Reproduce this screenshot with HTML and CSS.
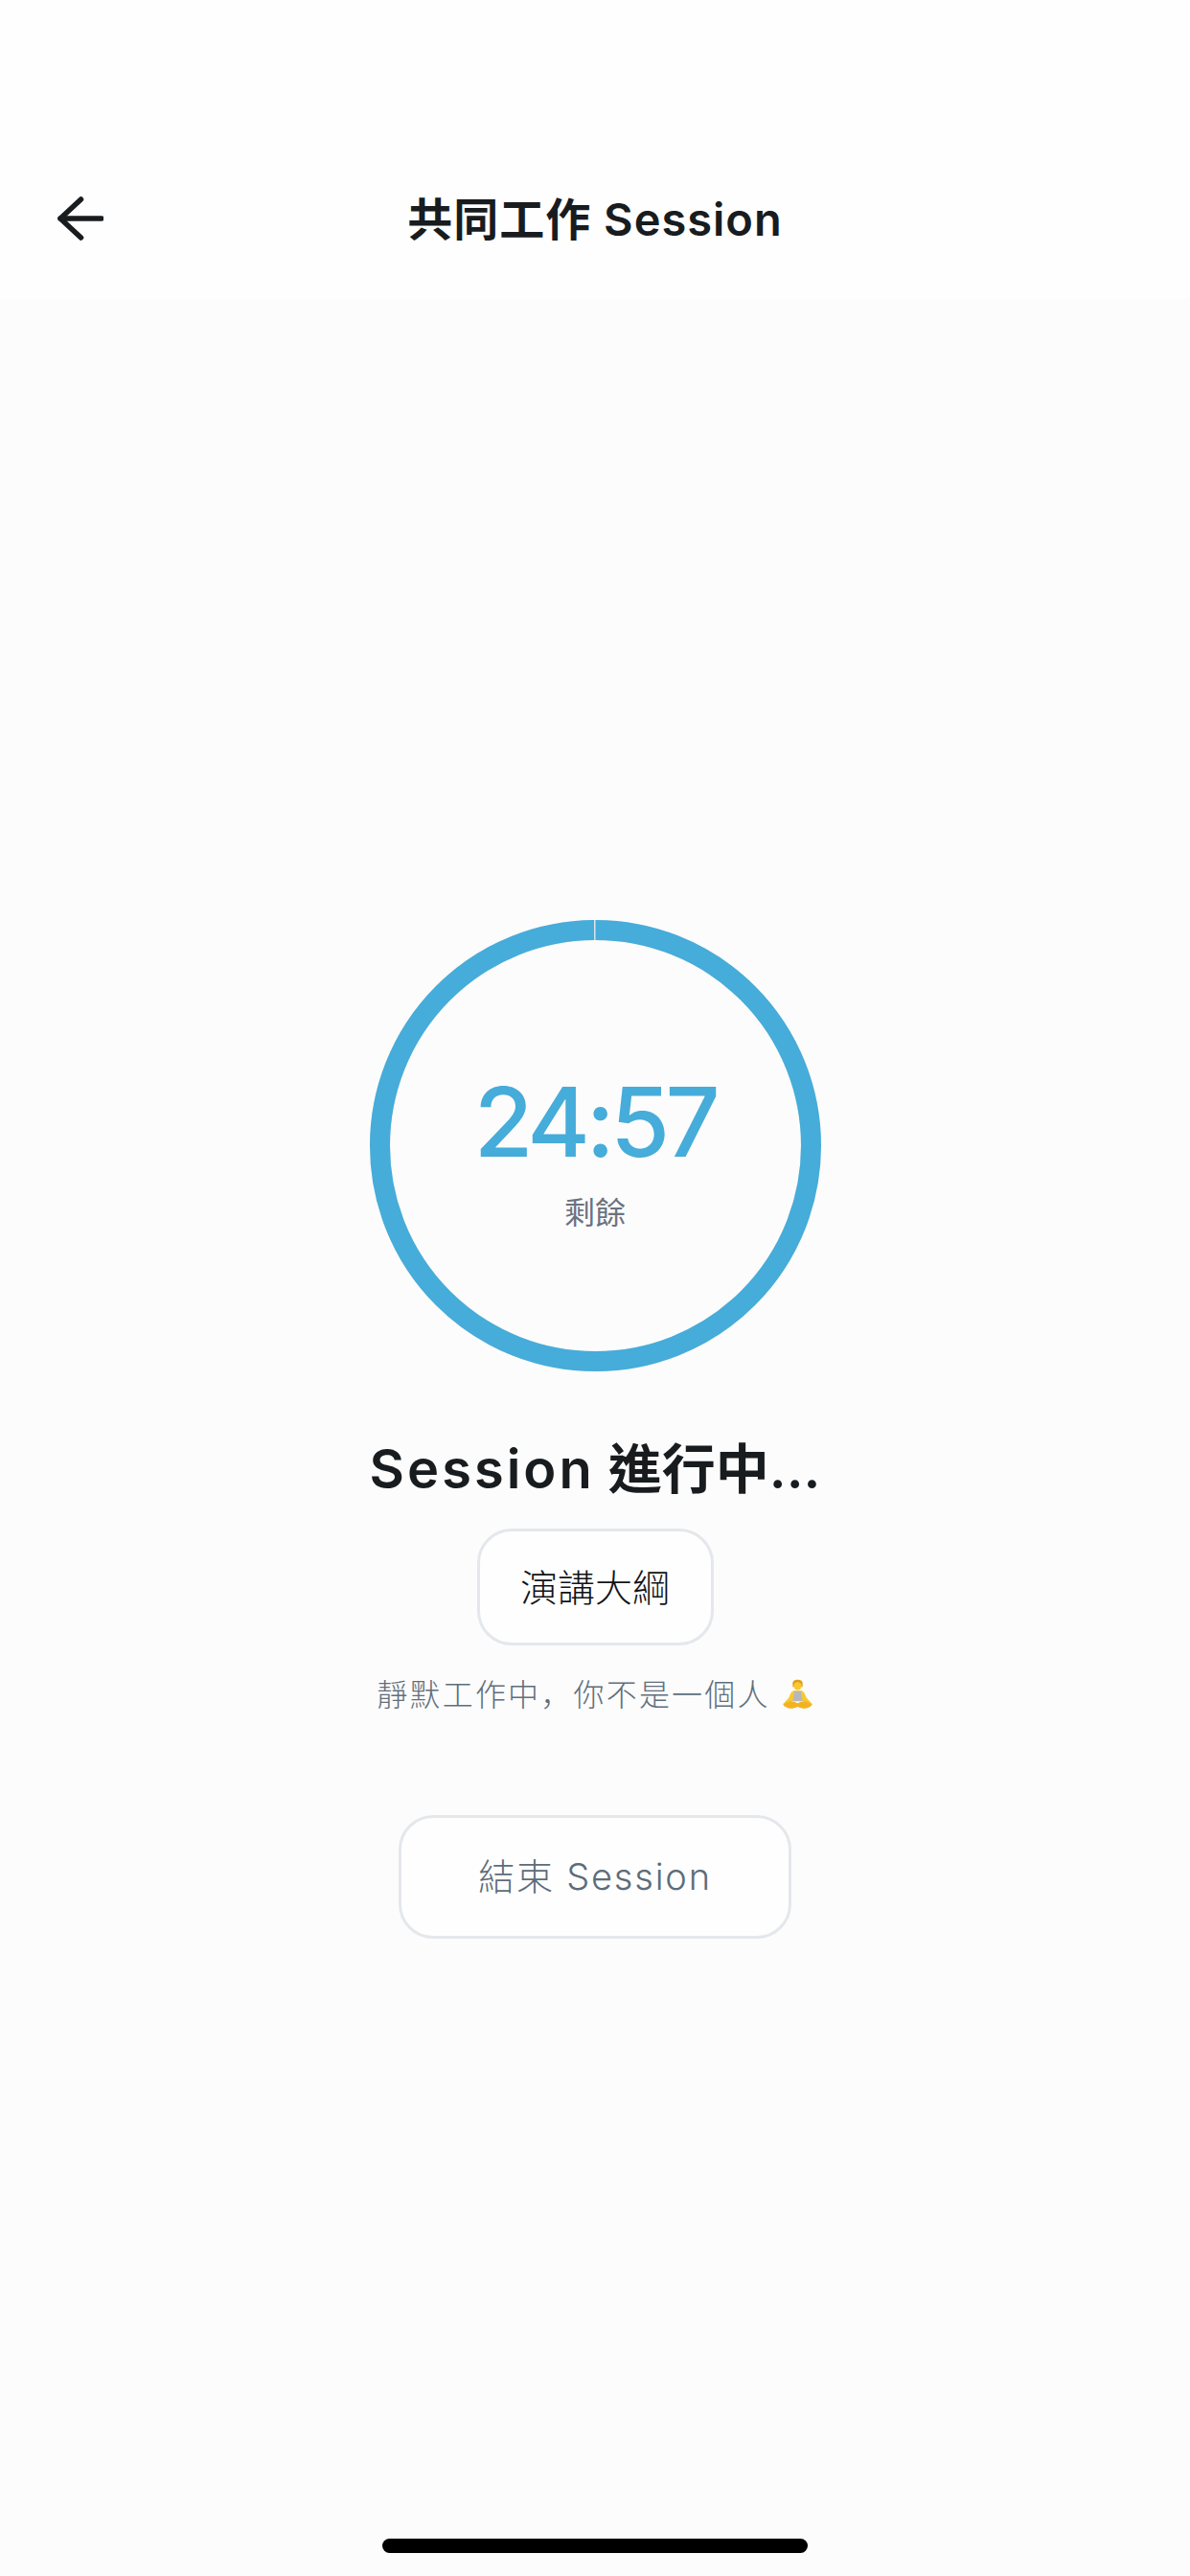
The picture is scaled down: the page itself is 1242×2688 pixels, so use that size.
FILE: index.html
```html
<!DOCTYPE html>
<html lang="zh-Hant">
<head>
    <meta charset="UTF-8">
    <meta name="viewport" content="width=device-width, initial-scale=1.0">
    <title>共同工作 Session</title>
    <link rel="stylesheet" href="styles.css">
</head>
<body>
    <header class="header">
        <svg class="back-icon" width="48" height="46" viewBox="0 0 48 46" fill="none" stroke="#181c1f" stroke-width="5.5" stroke-linecap="round" stroke-linejoin="round">
            <path d="M3 23H46"/>
            <path d="M24.5 3L3 23L24.5 43"/>
        </svg>
        <h1 class="header-title">共同工作 Session</h1>
    </header>

    <main class="session">
        <div class="timer">
            <svg class="timer-ring" width="471" height="471" viewBox="0 0 471 471" fill="none">
                <circle cx="235.5" cy="235.5" r="225" stroke="#e5e7eb" stroke-width="21"/>
                <circle cx="235.5" cy="235.5" r="225" stroke="#46acd9" stroke-width="21" stroke-dasharray="1411.7 2" transform="rotate(-90 235.5 235.5)"/>
            </svg>
            <div class="timer-text">
                <div class="timer-value">24:57</div>
                <div class="timer-label">剩餘</div>
            </div>
        </div>

        <h2 class="status"><span class="status-latin">Session</span> 進行中...</h2>
        <div class="task-chip">演講大綱</div>
        <p class="note">
            <span class="note-text">靜默工作中<span class="comma" lang="zh-Hans">，</span>你不是一個人</span>
            <svg class="note-emoji" width="33" height="33" viewBox="0 0 32 32">
                <path d="M11 5C11 0.5 21 0.5 21 5V9H11Z" fill="#dc9e1a"/>
                <circle cx="16" cy="8" r="4" fill="#f8c833"/>
                <path d="M12.5 12.5C9 13.5 8.5 17 7 20L1 26.5L3 28.5L11 23H21L29 28.5L31 26.5L25 20C23.5 17 23 13.5 19.5 12.5Z" fill="#f8c833"/>
                <path d="M12.8 13.5H19.2L21 23.5H11Z" fill="#b4b8bd"/>
                <path d="M1.5 27.5C6 22.5 11 22.5 16 25.5C21 22.5 26 22.5 30.5 27.5C27 31.5 21 31.5 16 29C11 31.5 5 31.5 1.5 27.5Z" fill="#f3b321"/>
            </svg>
        </p>
        <button class="end-button">結束 Session</button>
    </main>

    <footer class="home-area">
        <div class="home-bar"></div>
    </footer>
</body>
</html>
```

FILE: styles.css
```css
* {
    box-sizing: border-box;
}

body {
    margin: 0;
    height: 2688px;
    display: flex;
    flex-direction: column;
    background-color: #fcfcfc;
    font-family: Inter, "Noto Sans CJK TC", sans-serif;
    color: #181c1f;
}

.header {
    height: 312px;
    flex-shrink: 0;
    position: relative;
    display: flex;
    justify-content: center;
    background-color: #fefefe;
    padding-top: 199px;
}

.back-icon {
    position: absolute;
    left: 60px;
    top: 205px;
}

.header-title {
    margin: 0;
    font-size: 47px;
    line-height: 60px;
    font-weight: 600;
    letter-spacing: 1px;
}

.session {
    flex: 1;
    display: flex;
    flex-direction: column;
    align-items: center;
    padding-top: 648px;
}

.timer {
    display: grid;
    width: 471px;
    height: 471px;
}

.timer-ring,
.timer-text {
    grid-area: 1 / 1;
}

.timer-text {
    display: flex;
    flex-direction: column;
    align-items: center;
    padding-top: 151px;
}

.timer-value {
    font-size: 100px;
    line-height: 120px;
    font-weight: 550;
    letter-spacing: -4.5px;
    color: #46acd9;
}

.timer-label {
    margin-top: 15px;
    font-size: 32px;
    line-height: 40px;
    color: #6b7280;
}

.status {
    margin: 66px 0 0;
    font-size: 56px;
    line-height: 72px;
    font-weight: 600;
}

.status-latin {
    letter-spacing: 3px;
}

.task-chip {
    width: 247px;
    height: 122px;
    margin-top: 26px;
    padding-bottom: 4px;
    display: flex;
    align-items: center;
    justify-content: center;
    border: 3px solid #e4e7eb;
    border-radius: 36px;
    background-color: #fefefe;
    font-size: 39px;
    font-weight: 300;
    color: #111417;
}

.note {
    margin: 27px 0 0;
    display: flex;
    align-items: center;
    gap: 12px;
    font-size: 32px;
    line-height: 44px;
    font-weight: 300;
    color: #5f6f7c;
}

.note-text {
    letter-spacing: 2.2px;
}

.comma {
    font-family: "Noto Sans CJK SC", sans-serif;
}

.end-button {
    width: 410px;
    height: 129px;
    margin-top: 103px;
    padding: 0 0 6px;
    border: 3px solid #e4e7eb;
    border-radius: 36px;
    background-color: #fefefe;
    font-family: inherit;
    font-size: 38px;
    font-weight: 300;
    letter-spacing: 1.8px;
    color: #5d6c79;
}

.home-area {
    height: 64px;
    flex-shrink: 0;
    display: flex;
    justify-content: center;
    padding-top: 25px;
}

.home-bar {
    width: 444px;
    height: 15px;
    border-radius: 8px;
    background-color: #000;
}
```
